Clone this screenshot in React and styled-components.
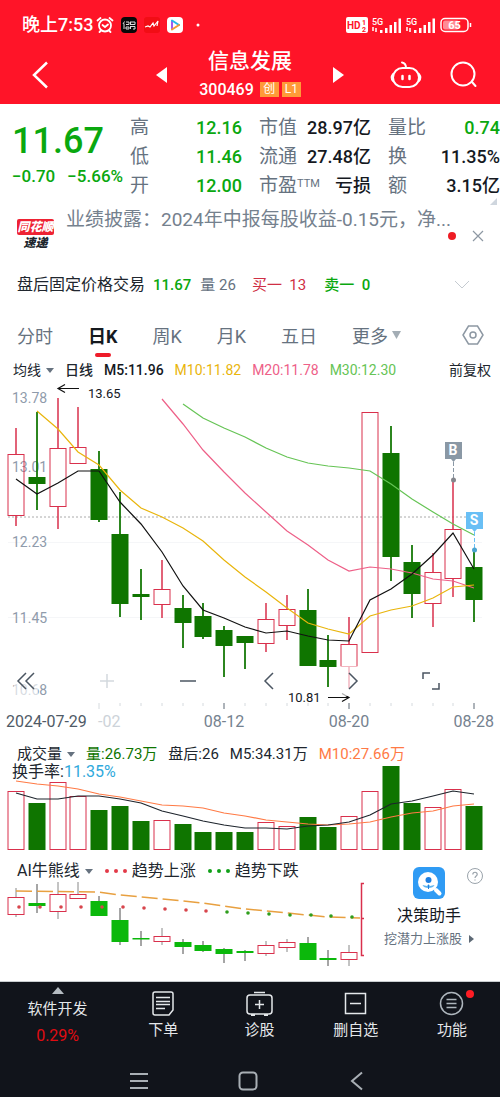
import React from 'react';
import styled, { createGlobalStyle } from 'styled-components';

const GlobalStyle = createGlobalStyle`
  * {
    box-sizing: border-box;
  }
  body {
    margin: 0;
    background: #fff;
    color: #20262e;
    font-family: Roboto, 'Noto Sans CJK SC', sans-serif;
  }
  button {
    display: inline-flex;
    align-items: center;
    justify-content: center;
    margin: 0;
    padding: 0;
    border: 0;
    background: none;
    color: inherit;
    font: inherit;
    cursor: pointer;
  }
  svg {
    display: block;
    flex-shrink: 0;
  }
`;

const colors = {
  red: '#ff1428',
  rise: '#d9304c',
  fall: '#0f7500',
  green: '#0aa80f',
  slate: '#66727f',
  axis: '#8f9bab',
  yellow: '#e9b50c',
  pink: '#ee6088',
  lime: '#66c455',
  orange: '#ff7a45',
};

const Page = styled.div`
  display: flex;
  flex-direction: column;
  min-height: 100vh;
`;

/* ---------- header ---------- */

const Header = styled.header`
  background: ${colors.red};
  color: #fff;
`;

const StatusBar = styled.div`
  display: flex;
  align-items: center;
  justify-content: space-between;
  height: 46px;
  padding: 4px 28px 0 22px;
`;

const StatusGroup = styled.div`
  display: flex;
  align-items: center;
  gap: ${(p) => p.$gap}px;
`;

const Clock = styled.span`
  margin-right: -4px;
  font-size: 18px;
  font-weight: 500;
  line-height: 24px;
`;

const TitleBar = styled.div`
  display: grid;
  grid-template-columns: 1fr 188px 1fr;
  align-items: center;
  height: 58px;
`;

const BackButton = styled.button`
  justify-self: start;
  margin-left: 30px;
`;

const Stock = styled.div`
  display: flex;
  align-items: center;
  justify-content: space-between;
`;

const StockName = styled.h1`
  margin: 0;
  font-size: 21px;
  font-weight: 500;
  line-height: 28px;
  text-align: center;
`;

const StockCode = styled.div`
  display: flex;
  align-items: center;
  justify-content: center;
  gap: 3px;
  height: 28px;
  font-size: 16px;
  font-weight: 500;
`;

const Tag = styled.span`
  width: 19px;
  height: 15px;
  background: #ff9a38;
  font-size: 12px;
  font-weight: 400;
  line-height: 15px;
  text-align: center;
`;

const HeaderActions = styled.div`
  display: flex;
  justify-content: flex-end;
  gap: 28px;
  padding-right: 22px;
`;

/* ---------- quote ---------- */

const Quote = styled.section`
  position: relative;
  display: grid;
  grid-template-columns: 130px 1fr;
  padding-top: 9px;
  height: 98px;
`;

const Corner = styled.svg`
  position: absolute;
  right: 3px;
  bottom: -3px;
`;

const PriceBox = styled.div`
  padding: 8px 0 0 12px;
  color: ${colors.green};
`;

const Price = styled.div`
  font-size: 36px;
  font-weight: 500;
  line-height: 40px;
`;

const Change = styled.div`
  display: flex;
  gap: 12px;
  font-size: 17px;
  font-weight: 500;
  line-height: 30px;
`;

const Stats = styled.div`
  display: grid;
  grid-template-columns: repeat(3, 1fr);
  column-gap: 17px;
`;

const StatList = styled.dl`
  margin: 0;
`;

const Stat = styled.div`
  display: flex;
  justify-content: space-between;
  height: 29px;
  line-height: 29px;
  white-space: nowrap;
  dt {
    color: ${colors.slate};
    font-size: 19px;
  }
  sup {
    font-size: 11px;
    line-height: 0;
    vertical-align: 5px;
  }
  dd {
    margin: 0;
    color: ${(p) => (p.$down ? colors.green : '#15191f')};
    font-size: 18px;
    font-weight: 500;
  }
`;

const News = styled.section`
  display: grid;
  grid-template-columns: 54px minmax(0, 1fr) auto;
  column-gap: 12px;
  height: 62px;
  padding: 4px 14px 0 0;
`;

const NewsLogo = styled.div`
  padding: 13px 0 0 17px;
  font-size: 12px;
  font-style: italic;
  font-weight: 900;
  line-height: 16px;
  text-align: center;
  white-space: nowrap;
  span {
    display: block;
    border-radius: 2px;
    background: #ee2233;
    color: #fff;
  }
`;

const Headline = styled.a`
  height: 28px;
  color: #75818e;
  font-size: 19px;
  line-height: 28px;
  text-decoration: none;
  white-space: nowrap;
`;

const NewsControls = styled.div`
  display: flex;
  align-items: center;
  gap: 14px;
  height: 60px;
`;

const AfterHours = styled.section`
  display: flex;
  align-items: center;
  height: 42px;
  padding: 0 30px 0 17px;
  font-size: 15px;
  line-height: 24px;
  white-space: nowrap;
  h2 {
    margin: 0 8px 0 0;
    font-size: 16px;
    font-weight: 400;
  }
  button {
    margin-left: auto;
  }
`;

const Figure = styled.span`
  margin-right: ${(p) => p.$gap || 0}px;
  color: ${(p) => p.$color};
  font-weight: ${(p) => (p.$bold ? 500 : 400)};
`;

/* ---------- tabs and legends ---------- */

const Tabs = styled.nav`
  display: flex;
  align-items: center;
  gap: 35px;
  height: 54px;
  padding: 4px 16px 0 17px;
`;

const Tab = styled.button`
  position: relative;
  gap: 4px;
  height: 40px;
  color: ${(p) => (p.$active ? '#15191f' : colors.slate)};
  font-size: 18px;
  font-weight: ${(p) => (p.$active ? 700 : 400)};
  &::after {
    content: '';
    display: ${(p) => (p.$active ? 'block' : 'none')};
    position: absolute;
    bottom: -2px;
    left: calc(50% - 8px);
    width: 16px;
    height: 4px;
    border-radius: 2px;
    background: #ee1c2a;
  }
`;

const SettingsButton = styled.button`
  margin-left: auto;
`;

const Legend = styled.div`
  display: flex;
  align-items: center;
  gap: ${(p) => p.$gap}px;
  height: ${(p) => p.$height}px;
  padding: 0 9px 0 ${(p) => p.$left}px;
  font-size: ${(p) => p.$size}px;
  line-height: 20px;
  white-space: nowrap;
`;

const LegendButton = styled.button`
  gap: 5px;
  margin-left: ${(p) => (p.$end ? 'auto' : '0')};
`;

const DotLabel = styled.span`
  display: flex;
  align-items: center;
  gap: 5px;
`;

/* ---------- charts ---------- */

const Pane = styled.div`
  position: relative;
`;

const Chart = styled.svg`
  width: 100%;
  height: auto;
  font-family: Roboto, 'Noto Sans CJK SC', sans-serif;
`;

const AxisText = styled.text`
  fill: ${(p) => p.$fill || colors.axis};
  font-size: ${(p) => p.$size || 14}px;
  text-anchor: ${(p) => p.$anchor || 'start'};
`;

const ChartTools = styled.div`
  position: absolute;
  left: 14px;
  right: 57px;
  bottom: 46px;
  display: flex;
  justify-content: space-between;
  button {
    width: 24px;
    height: 30px;
    background: rgba(255, 255, 255, 0.65);
  }
`;

const Turnover = styled.div`
  position: absolute;
  top: -4px;
  left: 12px;
  font-size: 16px;
  line-height: 20px;
`;

const AiSection = styled.section`
  display: grid;
  grid-template-columns: 370fr 130fr;
  flex: 1;
`;

const Assistant = styled.div`
  position: relative;
  display: flex;
  flex-direction: column;
  align-items: center;
  padding: 7px 12px 0 0;
  h3 {
    margin: 5px 0 0;
    color: #15191f;
    font-size: 16px;
    font-weight: 400;
    line-height: 24px;
  }
  a {
    display: flex;
    align-items: center;
    gap: 7px;
    color: ${colors.slate};
    font-size: 13px;
    line-height: 22px;
    text-decoration: none;
    white-space: nowrap;
  }
`;

const HelpButton = styled.button`
  position: absolute;
  top: 8px;
  right: 17px;
`;

/* ---------- bottom ---------- */

const Footer = styled.footer`
  border-top: 1px solid #c9cdd0;
  background: #11141b;
  color: #e4e7ea;
`;

const Actions = styled.nav`
  display: grid;
  grid-template-columns: 115fr repeat(4, 96fr);
  height: 82px;
  font-size: 15px;
  line-height: 22px;
`;

const Action = styled.button`
  && {
    flex-direction: column;
    justify-content: flex-start;
    gap: ${(p) => (p.$index ? 3 : 4)}px;
    padding-top: ${(p) => (p.$index ? 6 : 5)}px;
  }
  strong {
    color: #e00c12;
    font-size: 16px;
    font-weight: 400;
    line-height: 24px;
  }
`;

const IconWrap = styled.span`
  position: relative;
`;

const Badge = styled.i`
  position: absolute;
  top: 2px;
  right: -9px;
  width: 8px;
  height: 8px;
  border-radius: 50%;
  background: #ff1c24;
`;

const SystemNav = styled.div`
  display: flex;
  justify-content: center;
  gap: 85px;
  height: 33px;
  padding-right: 4px;
  align-items: center;
`;

/* ---------- data ---------- */

const STATS = [
  [
    { label: '高', value: '12.16', down: true },
    { label: '低', value: '11.46', down: true },
    { label: '开', value: '12.00', down: true },
  ],
  [
    { label: '市值', value: '28.97亿' },
    { label: '流通', value: '27.48亿' },
    { label: '市盈', sup: 'TTM', value: '亏损' },
  ],
  [
    { label: '量比', value: '0.74', down: true },
    { label: '换', value: '11.35%' },
    { label: '额', value: '3.15亿' },
  ],
];

const TABS = ['分时', '日K', '周K', '月K', '五日'];

// direction, high, body top, body bottom, low
const CANDLES = [
  ['r', 428, 454, 516, 526],
  ['g', 412, 477, 484, 510],
  ['r', 398, 448, 507, 529],
  ['r', 407, 447, 464, 464],
  ['g', 451, 469, 520, 522],
  ['g', 492, 534, 604, 617],
  ['g', 569, 594, 597, 620],
  ['r', 560, 589, 605, 618],
  ['g', 595, 608, 623, 648],
  ['g', 603, 616, 637, 639],
  ['g', 626, 630, 646, 677],
  ['g', 636, 636, 643, 669],
  ['r', 603, 619, 644, 652],
  ['r', 595, 609, 626, 640],
  ['g', 589, 610, 666, 666],
  ['g', 635, 660, 667, 687],
  ['r', 617, 644, 667, 688],
  ['r', 412, 412, 653, 653],
  ['g', 426, 453, 557, 581],
  ['g', 545, 562, 594, 618],
  ['r', 553, 572, 604, 627],
  ['r', 480, 529, 579, 597],
  ['g', 551, 567, 600, 622],
];

const VOLUMES = [791, 803, 782, 796, 810, 806, 821, 820, 824, 832, 832, 832, 822, 826, 817, 827, 816, 791, 766, 803, 807, 789, 806];

const AI_CANDLES = [
  ['r', 888, 897, 915, 917],
  ['g', 884, 903, 906, 913],
  ['r', 882, 894, 912, 919],
  ['r', 882, 894, 899, 899],
  ['g', 896, 901, 916, 916],
  ['g', 908, 920, 942, 945],
  ['g', 931, 938, 939, 946],
  ['r', 928, 936, 942, 945],
  ['g', 939, 942, 947, 954],
  ['g', 941, 945, 951, 952],
  ['g', 948, 949, 954, 963],
  ['g', 950, 951, 953, 961],
  ['r', 941, 945, 954, 956],
  ['r', 939, 942, 948, 952],
  ['g', 937, 943, 960, 960],
  ['g', 950, 958, 960, 966],
  ['r', 945, 952, 960, 966],
];

const AI_DOTS = [907, 907, 907, 907, 907, 907, 908, 909, 910, 911, 912, 913, 914, 915, 915, 916, 917];

const MA5 = [479, 494, 483, 471, 471, 502, 524, 552, 586, 610, 618, 627, 633, 631, 636, 640, 641, 600, 589, 574, 555, 533, 569];
const MA10 = [411, 429, 452, 465, 490, 508, 517, 528, 541, 560, 577, 592, 608, 623, 629, 634, 616, 610, 606, 598, 587, 585];
const MA20 = [399, 424, 450, 472, 493, 512, 531, 545, 560, 571, 567, 569, 573, 579, 581, 588];
const MA30 = [404, 418, 428, 437, 448, 457, 463, 466, 468, 471, 484, 499, 512, 524, 535];
const VOL5 = [793, 799, 799, 796, 796, 799, 803, 811, 816, 821, 825, 828, 828, 829, 826, 825, 822, 815, 804, 801, 796, 791, 794];
const VOL10 = [781, 784, 786, 789, 794, 797, 801, 805, 806, 808, 813, 816, 820, 822, 824, 825, 824, 822, 817, 813, 811, 806, 804];

const centre = (i) => Math.round(16 + i * 20.83);

const linePoints = (values, start = 0) =>
  values.map((y, i) => `${centre(i + start)},${y}`).join(' ');

/* ---------- parts ---------- */

const Triangle = ({ color = '#66727f', large }) => (
  <svg width={large ? 9 : 8} height={large ? 8 : 5} viewBox="0 0 8 6" preserveAspectRatio="none" fill={color}>
    <path d="M0 0h8L4 6z" />
  </svg>
);

const Candle = ({ i, data, fall = colors.fall, wick }) => {
  const [dir, high, top, bottom, low] = data;
  const x = centre(i);
  const color = dir === 'r' ? colors.rise : fall;
  return (
    <g stroke={color} fill={dir === 'r' ? 'none' : color}>
      <path
        d={`M${x} ${high}V${top}M${x} ${bottom}V${low}`}
        stroke={wick || color}
        strokeWidth={wick ? 1 : 1.5}
      />
      {dir === 'g' && <path d={`M${x} ${high}V${low}`} stroke={wick || color} />}
      <rect x={x - 8} y={top + 0.5} width="16" height={Math.max(bottom - top - 1, 0.5)} />
    </g>
  );
};

const Line = ({ values, start, color }) => (
  <polyline points={linePoints(values, start)} fill="none" stroke={color} strokeWidth="1.2" />
);

const KChart = () => (
  <Chart viewBox="0 380 500 362" role="img" aria-label="日K">
    <path d="M8 542.5H482M8 617.5H482" stroke="#f5f6f8" />
    <path d="M8 517H484" stroke="#aaa" strokeDasharray="2 2" />
    <AxisText x="12" y="403">13.78</AxisText>
    <AxisText x="12" y="472">13.01</AxisText>
    <AxisText x="12" y="547">12.23</AxisText>
    <AxisText x="12" y="623">11.45</AxisText>
    <AxisText x="12" y="695">10.68</AxisText>
    {CANDLES.map((c, i) => (
      <Candle key={i} i={i} data={c} />
    ))}
    <Line values={MA30} start={8} color={colors.lime} />
    <Line values={MA20} start={7} color={colors.pink} />
    <Line values={MA10} start={1} color={colors.yellow} />
    <Line values={MA5} color="#111" />
    <g fill="none" stroke="#111" strokeWidth="1.2">
      <path d="M79 388.500H58M65 384.500l-7 4 7 4" />
      <path d="M328 697.500h21M342 693.500l7 4-7 4" />
    </g>
    <AxisText x="88" y="398" $fill="#15191f" $size={13}>13.65</AxisText>
    <AxisText x="288" y="702" $fill="#15191f" $size={13}>10.81</AxisText>
    <g>
      <path d="M445 442h17v17h-6l-2.500 3-2.500-3h-6z" fill="#8a98a5" />
      <path d="M453.500 462v18" stroke="#8a98a5" strokeDasharray="4 2" />
      <circle cx="453.500" cy="480" r="2.500" fill="#84868c" />
      <AxisText x="453" y="455" $fill="#fff" $anchor="middle" fontWeight="700">B</AxisText>
    </g>
    <g>
      <path d="M466 512h17v17h-6l-2.500 3-2.500-3h-6z" fill="#69bff5" />
      <path d="M474.500 532v18" stroke="#69bff5" strokeDasharray="4 2" />
      <circle cx="474.500" cy="550" r="2.500" fill="#4aa3cf" />
      <AxisText x="474" y="525" $fill="#fff" $anchor="middle" fontWeight="700">S</AxisText>
    </g>
    {CANDLES.map((_, i) =>
      i < 4 ? null : (
        <path
          key={i}
          d={`M${centre(i)} 703v${i % 6 === 4 ? 6 : 3}`}
          stroke={[10, 16, 22].includes(i) ? '#5c6875' : '#d5dade'}
        />
      )
    )}
    <AxisText x="6" y="727" $fill="#4f5a66" $size={16}>2024-07-29</AxisText>
    <AxisText x="98" y="727" $fill="#cdd3d9" $size={16}>-02</AxisText>
    <AxisText x="224" y="727" $fill="#75828f" $size={16} $anchor="middle">08-12</AxisText>
    <AxisText x="349" y="727" $fill="#75828f" $size={16} $anchor="middle">08-20</AxisText>
    <AxisText x="494" y="727" $fill="#75828f" $size={16} $anchor="end">08-28</AxisText>
  </Chart>
);

const TOOLS = [
  { label: '最早', d: 'M12 4L4 12l8 8M20 4l-8 8 8 8' },
  { label: '放大', d: 'M12 5v14M5 12h14', faint: true },
  { label: '缩小', d: 'M4 12h16' },
  { label: '向左', d: 'M16 4L8 12l8 8' },
  { label: '向右', d: 'M11 4l8 8-8 8' },
  { label: '全屏', d: 'M4 10V4h7M13 20h7v-6' },
];

const VolumeChart = () => (
  <Chart viewBox="0 766 500 94" role="img" aria-label="成交量">
    {VOLUMES.map((top, i) => {
      const rise = CANDLES[i][0] === 'r';
      return (
        <rect
          key={i}
          x={centre(i) - 8}
          y={top + 0.5}
          width="16"
          height={849 - top}
          fill={rise ? '#fff' : colors.fall}
          stroke={rise ? colors.rise : colors.fall}
        />
      );
    })}
    <Line values={VOL10} color={colors.orange} />
    <Line values={VOL5} color="#1d242c" />
  </Chart>
);

const AiChart = () => (
  <Chart viewBox="0 882 370 92" role="img" aria-label="AI牛熊线">
    {AI_CANDLES.map((c, i) => (
      <Candle key={i} i={i} data={c} fall="#0bb80b" wick="#888" />
    ))}
    <polyline
      points="16,891 99,892 120,895 162,899 203,903 245,909 287,913 328,917 360,918"
      fill="none"
      stroke="#e8a040"
      strokeWidth="1.5"
      strokeDasharray="16 5"
    />
    {AI_DOTS.map((y, i) => (
      <circle key={i} cx={centre(i) + 3} cy={y} r="1.800" fill={i < 10 ? '#d8454c' : '#2f9e1c'} />
    ))}
    <path d="M364 883.500h-2.500v72h2.500M361 918.500h3" fill="none" stroke={colors.rise} strokeWidth="1.500" />
  </Chart>
);

const Dots = ({ color }) => (
  <svg width="22" height="6" viewBox="0 0 22 6" fill={color}>
    <circle cx="2" cy="3" r="2" />
    <circle cx="11" cy="3" r="2" />
    <circle cx="20" cy="3" r="2" />
  </svg>
);

const Signal = () => (
  <svg width="30" height="17" viewBox="0 0 30 17" fill="#fff">
    <text x="0" y="8" fontSize="9" fontWeight="500">5G</text>
    <path d="M1 10v4M4 11v4" stroke="#fff" strokeWidth="1.500" />
    <path d="M8 13h2.500v3H8zM13 11h2.500v5H13zM17.500 8H20v8h-2.500zM22 5h2.500v11H22zM26.500 1.500H29V16h-2.500z" />
  </svg>
);

const StatusIcons = () => (
  <>
    <svg width="18" height="18" viewBox="0 0 18 18" fill="none" stroke="#fff" strokeWidth="1.800" strokeLinecap="round">
      <circle cx="9" cy="9.500" r="6" />
      <path d="M1.500 4.500L4.500 2M16.500 4.500L13.500 2M6.500 9L9 11l3-2.500M5 14.500L3.500 16M13 14.500l1.500 1.500" />
    </svg>
    <svg width="16" height="16" viewBox="0 0 16 16">
      <rect width="16" height="16" rx="4" fill="#080808" />
      <path d="M3.500 4.500L2 7M3 6.500V12M5 5h3v2.500H5M5 10v2h3v-2zM9.500 5v3M9 5h5v2.500H9M9.500 9.500H14V12h-2M9.500 9v3" fill="none" stroke="#ddd" />
    </svg>
    <svg width="16" height="16" viewBox="0 0 16 16">
      <rect width="16" height="16" rx="3" fill="#f20d15" />
      <path d="M1 10l3-1 2 1 3-4 1 3 4-5-1 5" fill="none" stroke="#fff" strokeWidth="1.200" />
    </svg>
    <svg width="16" height="16" viewBox="0 0 16 16">
      <rect width="16" height="16" rx="4" fill="#fff" />
      <path d="M5 3.500v9" stroke="#a05cf0" strokeWidth="2" />
      <path d="M5 3.500L12 8" stroke="#22b8e8" strokeWidth="2" strokeLinecap="round" />
      <path d="M12 8l-7 4.500" stroke="#f29a38" strokeWidth="2" strokeLinecap="round" />
    </svg>
    <svg width="18" height="4" viewBox="0 0 18 4">
      <circle cx="8" cy="2" r="1.500" fill="#fff" />
    </svg>
  </>
);

const ActionIcon = ({ name }) => {
  const shapes = {
    order: (
      <>
        <path d="M5 4h16a2 2 0 012 2v16l-4 5H5a2 2 0 01-2-2V6a2 2 0 012-2z" />
        <path d="M6 9.500h14M6 13.500h14M6 16.500h14M6 20.500h9" />
      </>
    ),
    diagnose: (
      <>
        <rect x="1" y="7" width="25" height="19" rx="3" />
        <path d="M8 4.500h11M13.500 12v9M9 16.500h9" />
        <path d="M5 27h4M18 27h4" strokeWidth="2" />
      </>
    ),
    remove: (
      <>
        <rect x="3.500" y="5.500" width="20" height="20" />
        <path d="M8 15.500h11" />
      </>
    ),
    more: (
      <>
        <circle cx="13.500" cy="15.500" r="11" stroke="#aeb6bd" />
        <path d="M8.500 11.500h10M8.500 15.500h10M8.500 19.500h10" stroke="#aeb6bd" />
      </>
    ),
  };
  return (
    <svg width="27" height="28" viewBox="0 0 27 28" fill="none" stroke="#e4e7ea" strokeWidth="1.500">
      {shapes[name]}
    </svg>
  );
};

const ACTIONS = [
  { icon: 'order', label: '下单' },
  { icon: 'diagnose', label: '诊股' },
  { icon: 'remove', label: '删自选' },
  { icon: 'more', label: '功能', badge: true },
];

const App = () => (
  <Page>
    <GlobalStyle />
    <Header>
      <StatusBar>
        <StatusGroup $gap={7}>
          <Clock>晚上7:53</Clock>
          <StatusIcons />
        </StatusGroup>
        <StatusGroup $gap={4}>
          <svg width="22" height="16" viewBox="0 0 22 16">
            <rect width="22" height="16" rx="2" fill="#fff" />
            <g fill={colors.red} fontWeight="700">
              <text x="1" y="12" fontSize="10">HD</text>
              <text x="16" y="8" fontSize="7">1</text>
              <text x="16" y="15" fontSize="7">2</text>
            </g>
          </svg>
          <Signal />
          <Signal />
          <svg width="32" height="16" viewBox="0 0 32 16">
            <rect x="1" y="1.500" width="27" height="13" rx="4" fill="none" stroke="#fff" strokeWidth="1.500" />
            <rect x="3" y="3.500" width="16" height="9" rx="2" fill="#ff8c96" />
            <path d="M30.500 6v4" stroke="#fff" strokeWidth="1.500" />
            <text x="14.500" y="12" fontSize="11" fontWeight="700" fill="#fff" textAnchor="middle">65</text>
          </svg>
        </StatusGroup>
      </StatusBar>
      <TitleBar>
        <BackButton aria-label="返回">
          <svg width="20" height="28" viewBox="0 0 20 28" fill="none" stroke="#fff" strokeWidth="2.500">
            <path d="M17 1.500L4 14l13 12.500" />
          </svg>
        </BackButton>
        <Stock>
          <button aria-label="上一只">
            <svg width="11" height="16" viewBox="0 0 11 16" fill="#fff"><path d="M11 0v16L0 8z" /></svg>
          </button>
          <div>
            <StockName>信息发展</StockName>
            <StockCode>
              300469
              <span />
              <Tag>创</Tag>
              <Tag>L1</Tag>
            </StockCode>
          </div>
          <button aria-label="下一只">
            <svg width="11" height="16" viewBox="0 0 11 16" fill="#fff"><path d="M0 0v16l11-8z" /></svg>
          </button>
        </Stock>
        <HeaderActions>
          <button aria-label="智能助手">
            <svg width="32" height="30" viewBox="0 0 32 30" fill="none" stroke="#fff" strokeWidth="2" strokeLinecap="round">
              <rect x="3" y="8" width="26" height="19" rx="9.500" />
              <path d="M3 14c-1.500 2-1.500 5 0 7M29 14c1.500 2 1.500 5 0 7M16 8c0-3-1-5-4-5.500" />
              <path d="M12.500 16v3M19.500 16v3" strokeWidth="2.500" />
            </svg>
          </button>
          <button aria-label="搜索">
            <svg width="28" height="30" viewBox="0 0 28 30" fill="none" stroke="#fff" strokeWidth="2" strokeLinecap="round">
              <circle cx="13" cy="14" r="11.500" />
              <path d="M22 22l3.500 4" />
            </svg>
          </button>
        </HeaderActions>
      </TitleBar>
    </Header>

    <Quote>
      <PriceBox>
        <Price>11.67</Price>
        <Change>
          <span>−0.70</span>
          <span>−5.66%</span>
        </Change>
      </PriceBox>
      <Stats>
        {STATS.map((column, idx) => (
          <StatList key={idx}>
            {column.map((s) => (
              <Stat key={s.label} $down={s.down}>
                <dt>
                  {s.label}
                  {s.sup && <sup>{s.sup}</sup>}
                </dt>
                <dd>{s.value}</dd>
              </Stat>
            ))}
          </StatList>
        ))}
      </Stats>
      <Corner width="7" height="7" viewBox="0 0 7 7" fill="#cfd6de">
        <path d="M7 0v7H0z" />
      </Corner>
    </Quote>

    <News>
      <NewsLogo>
        <span>同花顺</span>
        速递
      </NewsLogo>
      <Headline href="#news">业绩披露：2024年中报每股收益-0.15元，净...</Headline>
      <NewsControls>
        <svg width="8" height="8" viewBox="0 0 8 8"><circle cx="4" cy="4" r="4" fill="#ee1c24" /></svg>
        <button aria-label="关闭">
          <svg width="16" height="16" viewBox="0 0 16 16" stroke="#8d98a3" strokeWidth="1.200">
            <path d="M3 3l10 10M13 3L3 13" />
          </svg>
        </button>
      </NewsControls>
    </News>

    <AfterHours>
      <h2>盘后固定价格交易</h2>
      <Figure $color={colors.green} $gap={9} $bold>11.67</Figure>
      <Figure $color={colors.slate} $gap={16}>量 26</Figure>
      <Figure $color="#d02f45" $gap={18}>买一 &nbsp;13</Figure>
      <Figure $color={colors.green} $bold>卖一 &nbsp;0</Figure>
      <button aria-label="展开">
        <svg width="16" height="10" viewBox="0 0 16 10" fill="none" stroke="#c5cbd1">
          <path d="M1 1l7 7 7-7" />
        </svg>
      </button>
    </AfterHours>

    <Tabs>
      {TABS.map((t) => (
        <Tab key={t} $active={t === '日K'}>{t}</Tab>
      ))}
      <Tab>
        更多
        <Triangle large color="#a3adb5" />
      </Tab>
      <SettingsButton aria-label="设置">
        <svg width="22" height="22" viewBox="0 0 22 22" fill="none" stroke="#8d98a3" strokeWidth="1.500">
          <path d="M6.500 2h9L21 11l-5.500 9h-9L1 11z" />
          <circle cx="11" cy="11" r="3" />
        </svg>
      </SettingsButton>
    </Tabs>

    <Legend $height={20} $left={13} $gap={11} $size={14}>
      <LegendButton>
        均线
        <Triangle />
      </LegendButton>
      <Figure $bold>日线</Figure>
      <Figure $color="#15191f" $bold>M5:11.96</Figure>
      <Figure $color={colors.yellow}>M10:11.82</Figure>
      <Figure $color={colors.pink}>M20:11.78</Figure>
      <Figure $color={colors.lime}>M30:12.30</Figure>
      <LegendButton $end>前复权</LegendButton>
    </Legend>

    <Pane>
      <KChart />
      <ChartTools>
        {TOOLS.map((t) => (
          <button key={t.label} aria-label={t.label}>
            <svg width="24" height="24" viewBox="0 0 24 24" fill="none" stroke={t.faint ? '#d3d9de' : '#4b5662'} strokeWidth="1.500">
              <path d={t.d} />
            </svg>
          </button>
        ))}
      </ChartTools>
    </Pane>

    <Legend $height={24} $left={17} $gap={11} $size={15}>
      <LegendButton>
        成交量
        <Triangle />
      </LegendButton>
      <Figure $color={colors.fall}>量:26.73万</Figure>
      <Figure>盘后:26</Figure>
      <Figure>M5:34.31万</Figure>
      <Figure $color={colors.orange}>M10:27.66万</Figure>
    </Legend>
    <Pane>
      <VolumeChart />
      <Turnover>
        换手率:<Figure $color="#2fa9dc">11.35%</Figure>
      </Turnover>
    </Pane>

    <AiSection>
      <div>
        <Legend $height={22} $left={17} $gap={12} $size={16}>
          <LegendButton>
            AI牛熊线
            <Triangle />
          </LegendButton>
          <DotLabel>
            <Dots color="#e33a48" />
            趋势上涨
          </DotLabel>
          <DotLabel>
            <Dots color="#10a018" />
            趋势下跌
          </DotLabel>
        </Legend>
        <AiChart />
      </div>
      <Assistant>
        <svg width="32" height="32" viewBox="0 0 32 32">
          <rect width="32" height="32" rx="6" fill="#2f9bf4" />
          <path d="M23 23l3.500 3.500" stroke="#fff" strokeWidth="4" strokeLinecap="round" />
          <circle cx="15" cy="15" r="10" fill="#fff" />
          <circle cx="15.500" cy="13" r="3" fill="#1f7fe0" />
          <path d="M9.500 18c1 4 11 4 12 0l-4.500 1-1.500-2-1.500 2z" fill="#5db4f0" />
          <path d="M15.500 18v4" stroke="#1f7fe0" />
        </svg>
        <h3>决策助手</h3>
        <a href="#assistant">
          挖潜力上涨股
          <svg width="5" height="8" viewBox="0 0 5 8" fill="#5d6975"><path d="M0 0l5 4-5 4z" /></svg>
        </a>
        <HelpButton aria-label="帮助">
          <svg width="16" height="16" viewBox="0 0 16 16" fill="none" stroke="#9aa3ab">
            <circle cx="8" cy="8" r="7.500" />
            <path d="M5.800 6.500c0-3 4.400-3 4.400 0 0 1.500-2.200 1.700-2.200 3.500M8 11.500v1" strokeWidth="1.200" />
          </svg>
        </HelpButton>
      </Assistant>
    </AiSection>

    <Footer>
      <Actions>
        <Action>
          <svg width="12" height="7" viewBox="0 0 12 7" fill="#b5bcc2"><path d="M6 0l6 7H0z" /></svg>
          <span>软件开发</span>
          <strong>0.29%</strong>
        </Action>
        {ACTIONS.map((a) => (
          <Action key={a.icon} $index>
            <IconWrap>
              <ActionIcon name={a.icon} />
              {a.badge && <Badge />}
            </IconWrap>
            {a.label}
          </Action>
        ))}
      </Actions>
      <SystemNav>
        <button aria-label="任务">
          <svg width="24" height="20" viewBox="0 0 24 20" stroke="#a9afb5" strokeWidth="2">
            <path d="M3 3h18M3 10h18M3 17h18" />
          </svg>
        </button>
        <button aria-label="主页">
          <svg width="24" height="20" viewBox="0 0 24 20" fill="none" stroke="#a9afb5" strokeWidth="2">
            <rect x="3.500" y="1.500" width="17" height="17" rx="3.500" />
          </svg>
        </button>
        <button aria-label="后退">
          <svg width="24" height="20" viewBox="0 0 24 20" fill="none" stroke="#a9afb5" strokeWidth="2">
            <path d="M17 1.500L7 10l10 8.500" />
          </svg>
        </button>
      </SystemNav>
    </Footer>
  </Page>
);

export default App;
